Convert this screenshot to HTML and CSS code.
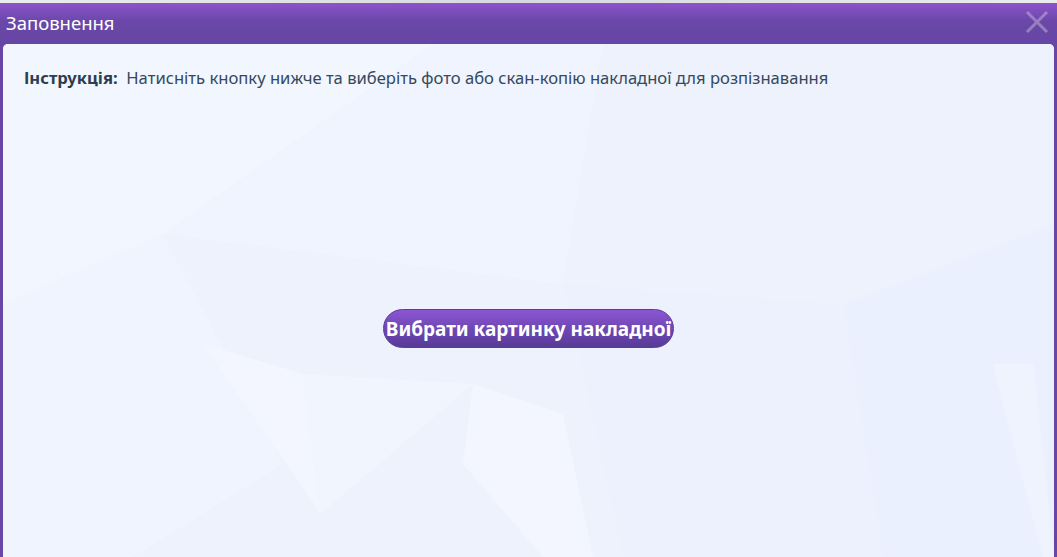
FILE: index.html
```html
<!DOCTYPE html>
<html lang="uk">
<head>
    <meta charset="UTF-8">
    <meta name="viewport" content="width=device-width, initial-scale=1.0">
    <link rel="stylesheet" href="styles.css">
</head>
<body>

<div class="page-strip"></div>

<div class="dialog">
    <div class="dialog-header">
        <span class="dialog-title">Заповнення</span>
        <button class="dialog-close" title="Закрити">
            <svg width="24" height="24" viewBox="0 0 24 24">
                <path d="M2 2 L22 22 M22 2 L2 22" stroke="#fff" stroke-width="3" fill="none"/>
            </svg>
        </button>
    </div>

    <div class="dialog-body">
        <svg class="poly-bg" viewBox="0 0 1051 513" preserveAspectRatio="none">
            <polygon points="0,0 430,0 160,190 0,260" fill="#f2f6fe"/>
            <polygon points="430,0 600,0 560,240 160,190" fill="#f0f4fe"/>
            <polygon points="600,0 1051,0 1051,180 840,260 560,240" fill="#eef2fd"/>
            <polygon points="840,260 1051,180 1051,513 880,513" fill="#eaf0fd"/>
            <polygon points="560,240 840,260 880,513 620,513" fill="#ecf1fd"/>
            <polygon points="0,260 160,190 280,420 130,513 0,513" fill="#f0f4fe"/>
            <polygon points="160,190 560,240 620,513 130,513 280,420" fill="#edf2fd"/>
            <polygon points="200,300 300,330 318,470" fill="#f3f6fe"/>
            <polygon points="300,330 470,340 318,470" fill="#f1f5fe"/>
            <polygon points="470,340 560,370 590,513 540,513 460,420" fill="#f3f6fe"/>
            <polygon points="990,320 1030,320 1051,513 1040,513" fill="#eff3fe"/>
        </svg>

        <div class="instruction">
            <b>Інструкція:</b>&nbsp; Натисніть кнопку нижче та виберіть фото або скан-копію накладної для розпізнавання
        </div>

        <div class="actions">
            <button class="pick-button">Вибрати картинку накладної</button>
        </div>
    </div>
</div>

</body>
</html>
```

FILE: styles.css
```css
html, body {
    height: 100%;
}
body {
    margin: 0;
    display: flex;
    flex-direction: column;
    font-family: "Noto Sans", "Open Sans", sans-serif;
    background: #f4f4f6;
    overflow: hidden;
}
.page-strip {
    height: 3px;
    flex-shrink: 0;
    background: linear-gradient(to right, #ececf0 0%, #d8d8de 50%, #ececf0 100%);
}
.dialog {
    flex: 1;
    display: flex;
    flex-direction: column;
    background: #6846a6;
    min-height: 0;
}
.dialog-header {
    height: 41px;
    flex-shrink: 0;
    display: flex;
    align-items: center;
    justify-content: space-between;
    padding: 0 8px 0 6px;
    background: linear-gradient(to bottom, #8c54cc 0%, #6a47a8 45%, #6646a4 100%);
}
.dialog-title {
    color: #fff;
    font-size: 18.5px;
    margin-top: -2px;
}
.dialog-close {
    background: none;
    border: none;
    padding: 0;
    margin-top: -3px;
    opacity: 0.3;
    cursor: pointer;
    display: flex;
}
.dialog-body {
    flex: 1;
    position: relative;
    margin: 0 3px;
    border-radius: 5px 5px 0 0;
    background: #eef3fd;
    overflow: hidden;
}
.poly-bg {
    position: absolute;
    top: 0;
    left: 0;
    width: 100%;
    height: 100%;
}
.instruction {
    position: relative;
    padding: 22px 0 0 21px;
    font-size: 16.6px;
    color: #34495e;
}
.instruction b {
    color: #2c3e50;
}
.actions {
    position: relative;
    display: flex;
    justify-content: center;
    margin-top: 220px;
}
.pick-button {
    height: 39px;
    padding: 0 2px;
    border-radius: 20px;
    border: 1px solid #5b3c9c;
    background: linear-gradient(to bottom, #8d55d2 0%, #6e48b4 50%, #573a96 100%);
    color: #fff;
    font-family: "Noto Sans", "Open Sans", sans-serif;
    font-weight: bold;
    font-size: 19px;
    cursor: pointer;
}
```
